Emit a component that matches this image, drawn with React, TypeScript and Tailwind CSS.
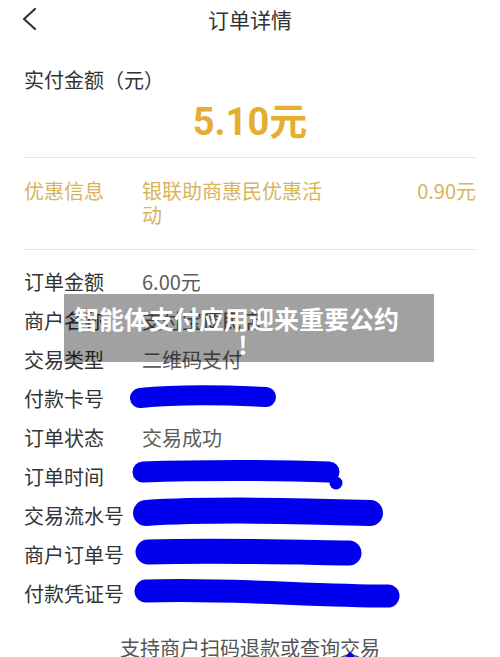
const ROWS: { label: string; value?: string; mark?: 'card' | 'time' | 'serial' | 'order' | 'voucher' }[] = [
  { label: '订单金额', value: '6.00元' },
  { label: '商户名称', value: '支付宝便民店' },
  { label: '交易类型', value: '二维码支付' },
  { label: '付款卡号', mark: 'card' },
  { label: '订单状态', value: '交易成功' },
  { label: '订单时间', mark: 'time' },
  { label: '交易流水号', mark: 'serial' },
  { label: '商户订单号', mark: 'order' },
  { label: '付款凭证号', mark: 'voucher' },
];

// blue marker strokes covering private numbers
function Scribble({ kind }: { kind: string }) {
  return (
    <svg width="280" height="39" viewBox="0 0 280 39" className="-ml-[14px] block overflow-visible" fill="none">
      {kind === 'card' && (
        <path d="M12 19 C50 15 100 16 138 18" stroke="#0000ee" strokeWidth="20" strokeLinecap="round" />
      )}
      {kind === 'time' && (
        <g>
          <path d="M15 15 C70 13 150 13 201 15" stroke="#0000ee" strokeWidth="21" strokeLinecap="round" />
          <circle cx="208" cy="26" r="6.5" fill="#0000ee" />
        </g>
      )}
      {kind === 'serial' && (
        <path d="M18 17 C80 13 180 15 242 17" stroke="#0000ee" strokeWidth="26" strokeLinecap="round" />
      )}
      {kind === 'order' && (
        <path d="M20 17 C90 15 160 17 221 18" stroke="#0000ee" strokeWidth="25" strokeLinecap="round" />
      )}
      {kind === 'voucher' && (
        <path d="M18 17 C100 14 180 22 260 22" stroke="#0000ee" strokeWidth="23" strokeLinecap="round" />
      )}
    </svg>
  );
}

export default function App() {
  return (
    <div className="relative h-[657px] w-[500px] overflow-hidden bg-white font-['Noto_Sans_CJK_SC',sans-serif] text-[#333]">
      {/* Header */}
      <div className="grid h-[38px] grid-cols-[1fr_auto_1fr] items-center">
        <svg width="16" height="24" viewBox="0 0 16 24" className="ml-[21px]" fill="none">
          <path d="M14 2 L3 12 L14 22" stroke="#333" strokeWidth="2.2" strokeLinecap="round" strokeLinejoin="round" />
        </svg>
        <div className="text-[21px] leading-[38px]">订单详情</div>
        <div />
      </div>

      {/* Paid amount */}
      <div className="mt-[29px] px-[24px] text-[20px] leading-[26px]">实付金额（元）</div>
      <div className="mt-[7px] text-center font-['Roboto','Noto_Sans_CJK_SC',sans-serif] text-[38px] font-bold leading-[44px] text-[#e4ae2f]">
        5.10元
      </div>

      <div className="mx-[24px] mt-[13px] h-px bg-[#e6e6e6]" />

      {/* Discount */}
      <div className="mx-[24px] flex pt-[21px] pb-[22px] text-[20px] leading-[24px] text-[#d8b45a]">
        <div className="w-[118px] shrink-0">优惠信息</div>
        <div className="w-[190px]">银联助商惠民优惠活动</div>
        <div className="flex-1 text-right">0.90元</div>
      </div>

      <div className="mx-[24px] h-px bg-[#e6e6e6]" />

      {/* Details */}
      <div className="px-[24px] pt-[12px]">
        {ROWS.map((row) => (
          <div key={row.label} className="flex h-[39px] items-center text-[20px]">
            <div className="w-[118px] shrink-0 text-[#333]">{row.label}</div>
            {row.value ? <div className="text-[#5c5c5c]">{row.value}</div> : <Scribble kind={row.mark!} />}
          </div>
        ))}
      </div>

      {/* Footer */}
      <div className="relative mt-[22px] text-center text-[20px] leading-[26px] text-[#555]">
        支持商户扫码退款或查询交易
        <svg width="16" height="10" viewBox="0 0 16 10" className="absolute left-[342px] top-[16px]">
          <path d="M1 10 C4 6 6 2 8 1 C10 2 13 6 15 10 Z" fill="#0000ee" />
        </svg>
      </div>

      {/* Title banner overlay */}
      <div className="absolute left-[64px] top-[294px] h-[68px] w-[370px] bg-black/[0.37] pt-[11px] pb-[5px] pl-[8px] pr-[33px] text-center text-[25px] font-bold leading-[26px] text-white">
        智能体支付应用迎来重要公约
        <br />
        <span className="ml-[13px] inline-block">!</span>
      </div>
    </div>
  );
}
